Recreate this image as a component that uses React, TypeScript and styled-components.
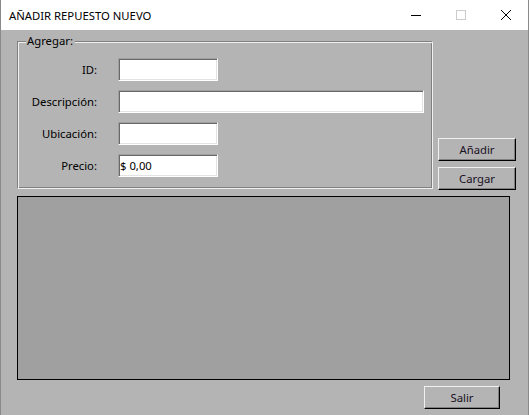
import { Fragment } from "react";
import styled, { createGlobalStyle } from "styled-components";

const GlobalStyle = createGlobalStyle`
    html, body {
        margin: 0;
        padding: 0;
        background: #b4b4b4;
    }
    * {
        box-sizing: border-box;
    }
`;

const Window = styled.div`
    width: 529px;
    height: 415px;
    display: flex;
    flex-direction: column;
    border-left: 1px solid #8a8a8a;
    border-right: 1px solid #8a8a8a;
    font-family: "Noto Sans", "Liberation Sans", sans-serif;
    font-size: 11.3px;
    color: #000;
`;

const TitleBar = styled.div`
    height: 30px;
    flex: none;
    display: flex;
    align-items: center;
    background: #fff;
`;

const Title = styled.span`
    flex: 1;
    padding-left: 8px;
    font-size: 11.3px;
`;

const CaptionButton = styled.div<{ $disabled?: boolean }>`
    width: 45px;
    height: 30px;
    display: flex;
    align-items: center;
    justify-content: center;
    color: ${(p) => (p.$disabled ? "#cccccc" : "#000")};
`;

const Client = styled.div`
    flex: 1;
    display: flex;
    flex-direction: column;
    background: #b4b4b4;
    padding: 11px 0 0 16px;
`;

const TopRow = styled.div`
    display: flex;
    align-items: flex-end;
`;

const GroupBox = styled.div`
    position: relative;
    width: 416px;
    height: 148px;
    border: 1px solid #808080;
    border-right-color: #f0f0f0;
    border-bottom-color: #f0f0f0;
    box-shadow: inset 1px 1px 0 #f0f0f0, inset -1px -1px 0 #808080;
    padding: 16px 0 0 0;
`;

const Legend = styled.span`
    position: absolute;
    left: 8px;
    top: -9px;
    padding: 0 2px 0 1px;
    background: #b4b4b4;
    line-height: 16px;
`;

const Form = styled.div`
    display: grid;
    grid-template-columns: 79px auto;
    column-gap: 21px;
    row-gap: 9px;
    align-items: center;
    justify-items: start;
`;

const Label = styled.label`
    justify-self: end;
    line-height: 23px;
`;

const Field = styled.div<{ $width: number }>`
    width: ${(p) => p.$width}px;
    height: 23px;
    background: #fff;
    border-top: 1px solid #a0a0a0;
    border-left: 1px solid #a0a0a0;
    border-right: 1px solid #fff;
    border-bottom: 1px solid #fff;
    box-shadow: inset 1px 1px 0 #696969, inset -1px -1px 0 #e3e3e3;
    padding: 0 1px;
    line-height: 21px;
`;

const ButtonColumn = styled.div`
    display: flex;
    flex-direction: column;
    gap: 6px;
    margin-left: 5px;
    margin-bottom: -1px;
`;

const Button = styled.button<{ $width: number }>`
    width: ${(p) => p.$width}px;
    height: 23px;
    padding: 0;
    background: #b4b4b4;
    border-top: 1px solid #f0f0f0;
    border-left: 1px solid #f0f0f0;
    border-right: 1px solid #000;
    border-bottom: 1px solid #000;
    box-shadow: inset -1px -1px 0 #808080;
    font-family: inherit;
    font-size: 11.3px;
    color: #1a1024;
`;

const ListPanel = styled.div`
    width: 493px;
    height: 184px;
    margin-top: 7px;
    background: #a0a0a0;
    border: 1px solid #000;
`;

const Footer = styled.div`
    display: flex;
    justify-content: flex-end;
    width: 483px;
    margin-top: 6px;
`;

export default () => {
    const rows = [
        { label: "ID:", width: 100, value: "" },
        { label: "Descripción:", width: 306, value: "" },
        { label: "Ubicación:", width: 100, value: "" },
        { label: "Precio:", width: 100, value: "$ 0,00" },
    ];

    return (
        <>
            <GlobalStyle />
            <Window>
                <TitleBar>
                    <Title>AÑADIR REPUESTO NUEVO</Title>
                    <CaptionButton>
                        <svg width="10" height="10" viewBox="0 0 10 10">
                            <path d="M0 5.5h10" stroke="currentColor" strokeWidth="1" />
                        </svg>
                    </CaptionButton>
                    <CaptionButton $disabled>
                        <svg width="10" height="10" viewBox="0 0 10 10">
                            <rect x="0.5" y="0.5" width="9" height="9" fill="none" stroke="currentColor" />
                        </svg>
                    </CaptionButton>
                    <CaptionButton>
                        <svg width="10" height="10" viewBox="0 0 10 10">
                            <path d="M0 0L10 10M10 0L0 10" stroke="currentColor" strokeWidth="1" />
                        </svg>
                    </CaptionButton>
                </TitleBar>
                <Client>
                    <TopRow>
                        <GroupBox>
                            <Legend>Agregar:</Legend>
                            <Form>
                                {rows.map((r) => (
                                    <Fragment key={r.label}>
                                        <Label>{r.label}</Label>
                                        <Field $width={r.width}>{r.value}</Field>
                                    </Fragment>
                                ))}
                            </Form>
                        </GroupBox>
                        <ButtonColumn>
                            <Button $width={78}>Añadir</Button>
                            <Button $width={78}>Cargar</Button>
                        </ButtonColumn>
                    </TopRow>
                    <ListPanel />
                    <Footer>
                        <Button $width={76}>Salir</Button>
                    </Footer>
                </Client>
            </Window>
        </>
    );
};
